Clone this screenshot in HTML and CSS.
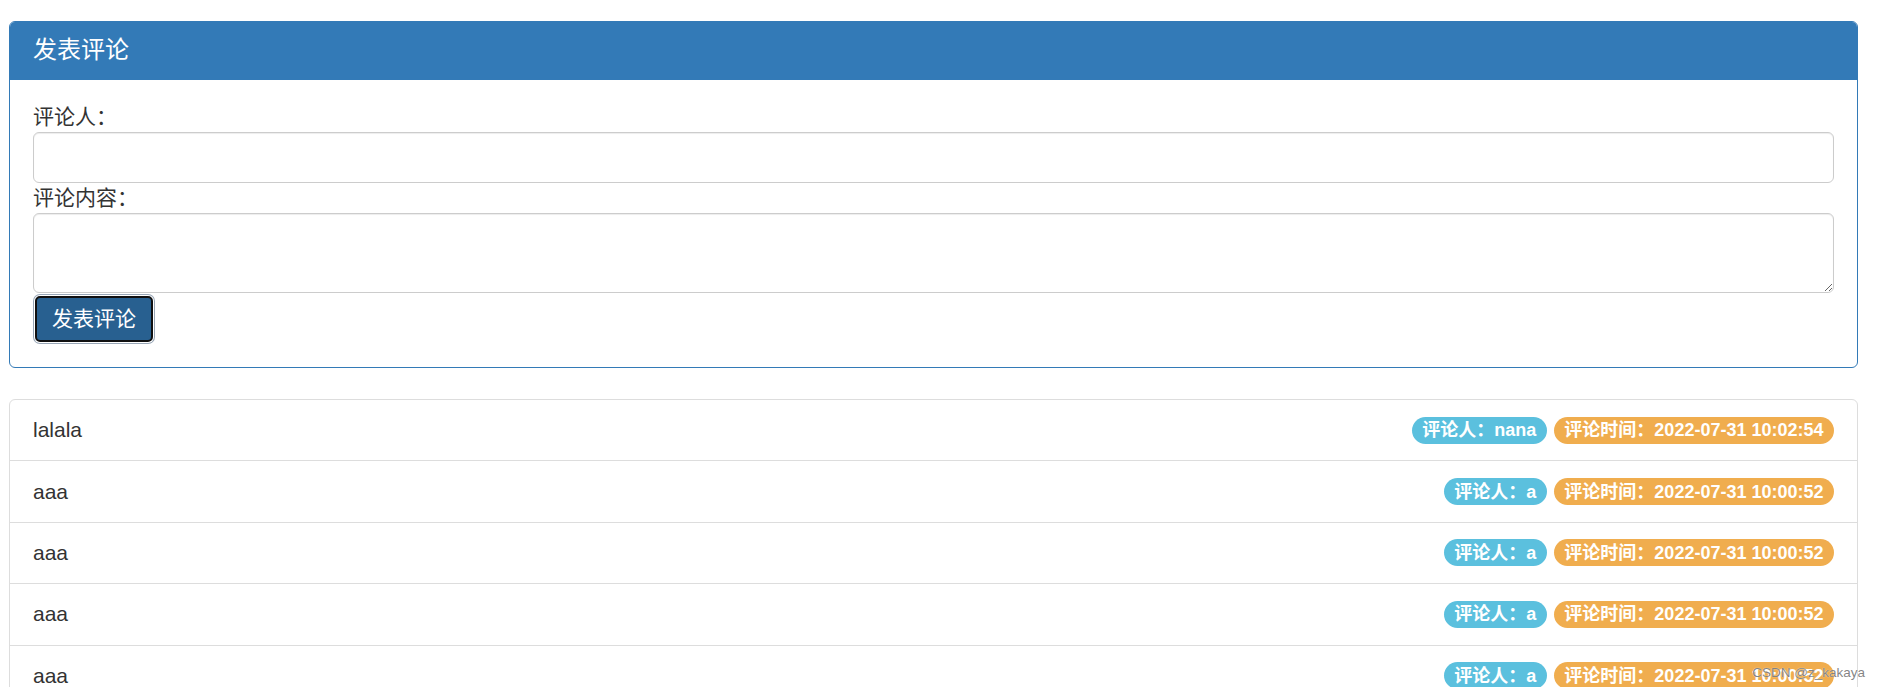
FILE: index.html
```html
<!DOCTYPE html>
<html>
  <head>
    <meta charset="utf-8">
    <meta name="viewport" content="width=device-width, initial-scale=1.0">
    <title>发表评论</title>
    <link rel="stylesheet" href="styles.css">
  </head>
  <body>
    <!-- 发表评论面板 -->
    <div class="panel">
      <div class="panel-heading">发表评论</div>
      <div class="panel-body">
        <label class="field-label" for="user">评论人：</label>
        <input class="form-control" type="text" id="user">
        <label class="field-label" for="content">评论内容：</label>
        <textarea class="form-control text-area" id="content" rows="2"></textarea>
        <button class="btn-primary" id="submitButton">发表评论</button>
      </div>
    </div>

    <!-- 评论列表 -->
    <ul class="list-group">
      <li class="list-group-item">
        <span class="comment">lalala</span>
        <span class="badges">
          <span class="badge badge-info">评论人：nana</span>
          <span class="badge badge-warning">评论时间：2022-07-31 10:02:54</span>
        </span>
      </li>
      <li class="list-group-item">
        <span class="comment">aaa</span>
        <span class="badges">
          <span class="badge badge-info">评论人：a</span>
          <span class="badge badge-warning">评论时间：2022-07-31 10:00:52</span>
        </span>
      </li>
      <li class="list-group-item">
        <span class="comment">aaa</span>
        <span class="badges">
          <span class="badge badge-info">评论人：a</span>
          <span class="badge badge-warning">评论时间：2022-07-31 10:00:52</span>
        </span>
      </li>
      <li class="list-group-item">
        <span class="comment">aaa</span>
        <span class="badges">
          <span class="badge badge-info">评论人：a</span>
          <span class="badge badge-warning">评论时间：2022-07-31 10:00:52</span>
        </span>
      </li>
      <li class="list-group-item">
        <span class="comment">aaa</span>
        <span class="badges">
          <span class="badge badge-info">评论人：a</span>
          <span class="badge badge-warning">评论时间：2022-07-31 10:00:52</span>
        </span>
      </li>
    </ul>

    <!-- 水印 -->
    <div class="watermark">CSDN @z_kakaya</div>
  </body>
</html>
```

FILE: styles.css
```css
html, body {
  height: 100%;
  overflow: hidden;
}
body {
  margin: 0;
  padding: 21px 22px 0 9px;
  box-sizing: border-box;
  background: #fff;
  color: #333;
  font-family: "Liberation Sans", Arial, "Noto Sans CJK SC", sans-serif;
  font-size: 21px;
  line-height: 30px;
  position: relative;
}
/* 面板 */
.panel {
  border: 1px solid #337ab7;
  border-radius: 6px;
  background: #fff;
}
.panel-heading {
  background-color: #337ab7;
  color: #fff;
  font-size: 24px;
  line-height: 28px;
  padding: 14px 23px 16px;
  border-radius: 5px 5px 0 0;
}
.panel-body {
  display: flex;
  flex-direction: column;
  align-items: flex-start;
  padding: 22px 23px 23px;
}
.field-label {
  display: block;
}
.form-control {
  display: block;
  width: 100%;
  height: 51px;
  box-sizing: border-box;
  margin: 0;
  padding: 9px 18px;
  font: inherit;
  color: #555;
  background: #fff;
  border: 1px solid #ccc;
  border-radius: 6px;
  box-shadow: inset 0 1px 1px rgba(0, 0, 0, 0.075);
}
.text-area {
  height: 80px;
  resize: vertical;
}
/* 按钮（获得焦点的样子） */
.btn-primary {
  margin: 3px 0 2px 2px;
  width: 118px;
  height: 46px;
  padding: 0;
  font: inherit;
  font-size: 21px;
  color: #fff;
  background-color: #286090;
  border: 2px solid #101010;
  border-radius: 5px;
  box-shadow: 0 0 0 1px #fff, 0 0 0 2px #98a6b6;
  cursor: pointer;
}
/* 列表 */
.list-group {
  list-style: none;
  margin: 31px 0 0;
  padding: 0;
}
.list-group-item {
  display: flex;
  justify-content: space-between;
  align-items: center;
  padding: 15.2px 23px;
  margin-bottom: -1px;
  border: 1px solid #ddd;
  background: #fff;
}
.list-group-item:first-child {
  border-radius: 6px 6px 0 0;
}
.badges {
  display: flex;
  gap: 7px;
}
.badge {
  display: inline-block;
  padding: 4.5px 10.5px;
  font-size: 18px;
  font-weight: bold;
  line-height: 18px;
  color: #fff;
  border-radius: 15px;
  white-space: nowrap;
}
.badge-info {
  background-color: #5bc0de;
}
.badge-warning {
  background-color: #f0ad4e;
}
.watermark {
  position: absolute;
  right: 15px;
  bottom: 6px;
  font-size: 13.5px;
  line-height: 16px;
  color: rgba(110, 110, 110, 0.85);
  text-shadow: 0 0 1px #fff;
  pointer-events: none;
}
```
